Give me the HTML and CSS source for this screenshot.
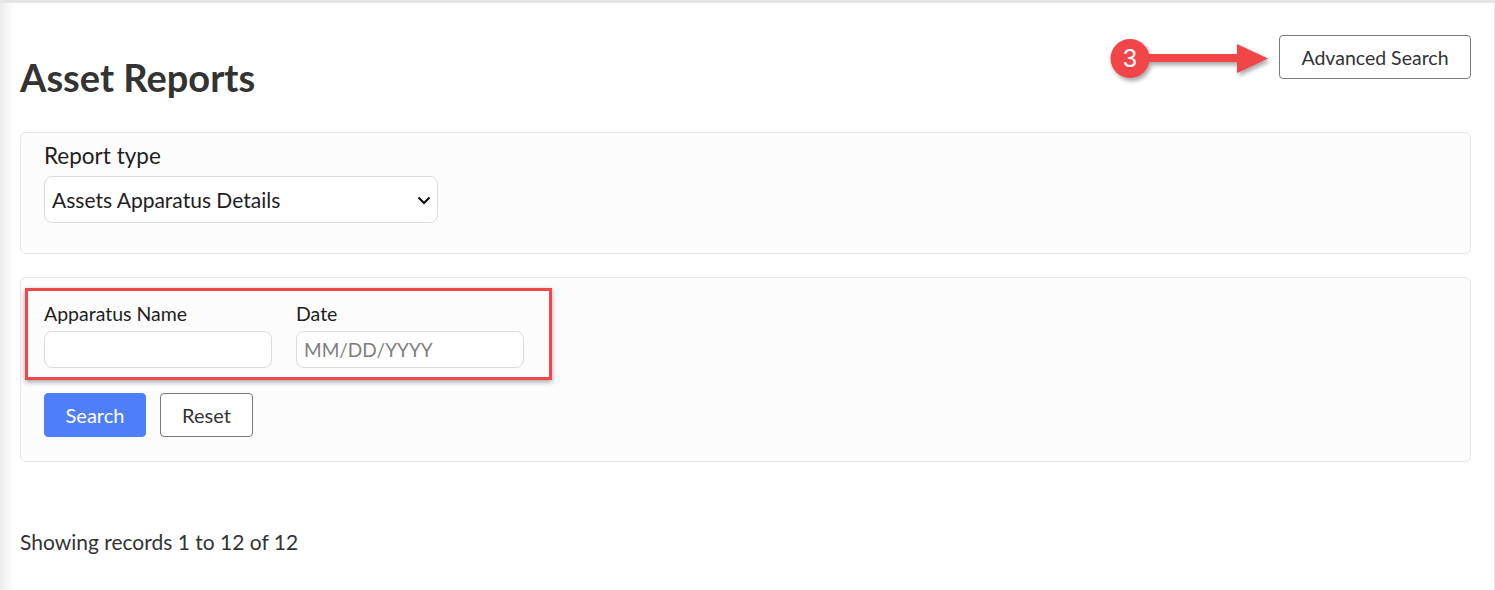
FILE: index.html
```html
<!DOCTYPE html>
<html lang="en">
<head>
    <meta charset="UTF-8">
    <meta name="viewport" content="width=device-width, initial-scale=1.0">
    <title>Asset Reports</title>
    <link rel="stylesheet" href="styles.css">
</head>
<body>
    <div class="page">
        <div class="header">
            <h1>Asset Reports</h1>
            <button class="btn btn-outline btn-advanced">Advanced Search</button>
        </div>

        <!-- callout: step badge + arrow pointing at the button -->
        <svg class="callout" width="180" height="64" viewBox="0 0 180 64">
            <g class="callout-shape">
                <rect x="45" y="24" width="96" height="8" fill="#f24547"/>
                <polygon points="137,14 168,28.5 137,43" fill="#f24547"/>
                <circle cx="30" cy="28.5" r="19.5" fill="#f24547"/>
            </g>
            <text x="30" y="37" text-anchor="middle" class="callout-num">3</text>
        </svg>

        <div class="card card-type">
            <label for="reportType" class="field-label big">Report type</label>
            <div class="select-wrap">
                <select id="reportType">
                    <option>Assets Apparatus Details</option>
                </select>
                <svg class="chevron" width="14" height="9" viewBox="0 0 14 9">
                    <polyline points="1.5,1.5 7,7 12.5,1.5" fill="none" stroke="#111" stroke-width="2.2"/>
                </svg>
            </div>
        </div>

        <div class="card card-filter">
            <div class="highlight-box"></div>
            <div class="filter-row">
                <div class="field">
                    <label for="apparatus" class="field-label">Apparatus Name</label>
                    <input type="text" id="apparatus">
                </div>
                <div class="field">
                    <label for="date" class="field-label">Date</label>
                    <input type="text" id="date" placeholder="MM/DD/YYYY">
                </div>
            </div>
            <div class="actions">
                <button class="btn btn-primary">Search</button>
                <button class="btn btn-outline btn-reset">Reset</button>
            </div>
        </div>

        <p class="records">Showing records 1 to 12 of 12</p>
    </div>
</body>
</html>
```

FILE: styles.css
```css
body {
    margin: 0;
    font-family: Lato, "Open Sans", sans-serif;
    color: #333;
    background-color: #fff;
}
.page {
    position: relative;
    box-sizing: border-box;
    min-height: 590px;
    padding: 0 23px 1px 20px;
    border-top: 3px solid #e4e4e4;
    border-right: 1px solid #e8e8e8;
    background: linear-gradient(to right, #ececec, #fff 14px);
}
.header {
    display: flex;
    justify-content: space-between;
    align-items: flex-start;
}
h1 {
    margin: 52px 0 0;
    font-size: 38px;
    line-height: 1.2;
    font-weight: 700;
    color: #333;
}
.btn {
    font-family: inherit;
    font-size: 20px;
    height: 44px;
    border-radius: 4px;
    cursor: pointer;
}
.btn-outline {
    background-color: #fff;
    border: 1px solid #7a7a7a;
    color: #333;
}
.btn-advanced {
    margin-top: 32px;
    width: 192px;
    font-size: 19.5px;
}
.btn-primary {
    width: 102px;
    background-color: #4f7efa;
    border: 1px solid #4f7efa;
    color: #fff;
}
.btn-reset {
    width: 93px;
}

.callout {
    position: absolute;
    left: 1100px;
    top: 27px;
}
.callout-shape {
    filter: drop-shadow(2px 3px 2px rgba(0, 0, 0, 0.35));
}
.callout-num {
    font-family: "Liberation Sans", Arial, sans-serif;
    font-size: 25px;
    fill: #fff;
}

.card {
    position: relative;
    background-color: #fcfcfc;
    border: 1px solid #e6e6e6;
    border-radius: 6px;
}
.card-type {
    margin-top: 31px;
    padding: 9px 23px 30px;
}
.card-filter {
    margin-top: 23px;
    padding: 24px 23px 24px;
}
.field-label {
    display: block;
    font-size: 19.5px;
    line-height: 1.2;
    color: #1e1e1e;
}
.field-label.big {
    font-size: 22.5px;
    line-height: 27px;
    margin-bottom: 7px;
}
.select-wrap {
    position: relative;
    width: 394px;
}
select {
    appearance: none;
    -webkit-appearance: none;
    box-sizing: border-box;
    width: 100%;
    height: 47px;
    padding: 0 7px;
    font-family: inherit;
    font-size: 21px;
    color: #1e1e1e;
    background-color: #fff;
    border: 1px solid #dcdcdc;
    border-radius: 8px;
}
.chevron {
    position: absolute;
    right: 7px;
    top: 20px;
    pointer-events: none;
}
.filter-row {
    display: flex;
    gap: 24px;
}
.field label {
    margin-bottom: 6px;
}
input[type="text"] {
    box-sizing: border-box;
    width: 228px;
    height: 37px;
    padding: 0 7px;
    font-family: inherit;
    font-size: 19px;
    color: #333;
    background-color: #fff;
    border: 1px solid #dcdcdc;
    border-radius: 8px;
}
input::placeholder {
    color: #7d7d7d;
}
.actions {
    display: flex;
    gap: 14px;
    margin-top: 25px;
}
.highlight-box {
    position: absolute;
    left: 4px;
    top: 10px;
    width: 521px;
    height: 86px;
    border: 3px solid #f04848;
    box-shadow: 0 2px 5px rgba(0, 0, 0, 0.35);
    pointer-events: none;
}
.records {
    margin: 67px 0 0;
    font-size: 21px;
    line-height: 1.2;
    color: #333;
}
```
